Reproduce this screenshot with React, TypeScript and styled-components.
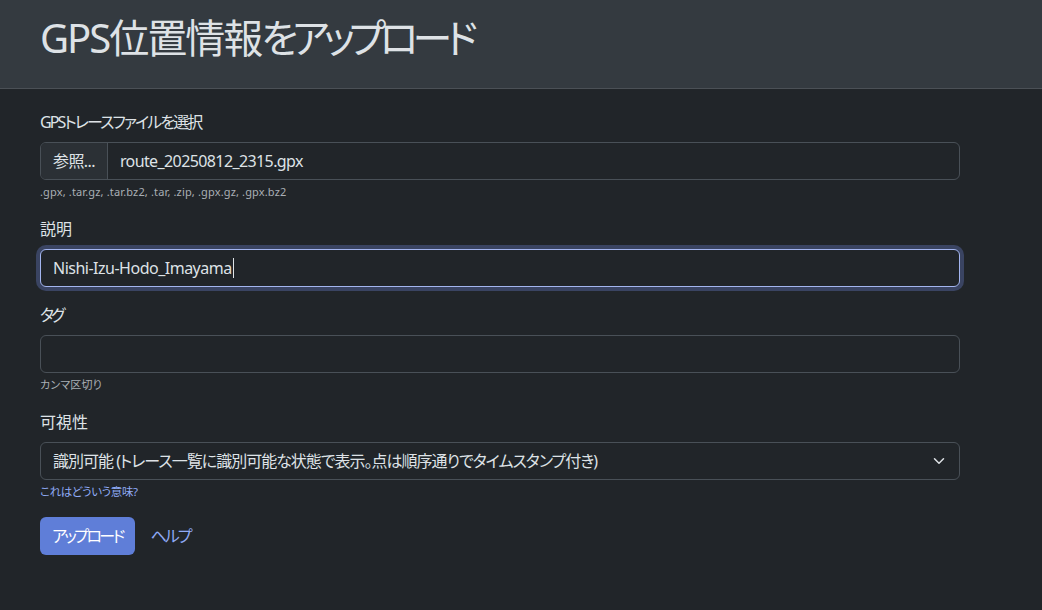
import styled, { createGlobalStyle } from 'styled-components'

const GlobalStyle = createGlobalStyle`
	html, body {
		margin: 0;
		padding: 0;
		background: #212529;
	}
	body {
		font-family: 'Noto Sans', 'Noto Sans CJK JP', sans-serif;
		font-feature-settings: 'palt';
		color: #dee2e6;
		font-size: 16px;
		line-height: 1.5;
	}
	* {
		box-sizing: border-box;
	}
`

function App() {
	return (
		<Page>
			<GlobalStyle />
			<Header>
				<Title>
					GPS位置情報<Kana>をアップロード</Kana>
				</Title>
			</Header>
			<Content>
				<Group>
					<Label $tight={-1.9}>GPSトレースファイルを選択</Label>
					<InputGroup>
						<BrowseButton>参照...</BrowseButton>
						<FileName>route_20250812_2315.gpx</FileName>
					</InputGroup>
					<Hint>.gpx, .tar.gz, .tar.bz2, .tar, .zip, .gpx.gz, .gpx.bz2</Hint>
				</Group>
				<Group>
					<Label>説明</Label>
					<TextInput $focused>
						Nishi-Izu-Hodo_Imayama
						<Caret />
					</TextInput>
				</Group>
				<Group>
					<Label $tight={-3}>タグ</Label>
					<TextInput />
					<Hint>カンマ区切り</Hint>
				</Group>
				<Group>
					<Label>可視性</Label>
					<Select>
						識別可能 (トレース一覧に識別可能な状態で表示。点は順序通りでタイムスタンプ付き)
						<Chevron viewBox="0 0 16 16" width="16" height="12">
							<path
								d="m2 5 6 6 6-6"
								fill="none"
								stroke="#dee2e6"
								strokeWidth="2"
								strokeLinecap="round"
								strokeLinejoin="round"
							/>
						</Chevron>
					</Select>
					<HintLink>これはどういう意味?</HintLink>
				</Group>
				<Actions>
					<PrimaryButton>アップロード</PrimaryButton>
					<LinkButton>ヘルプ</LinkButton>
				</Actions>
			</Content>
		</Page>
	)
}

const Page = styled.div`
	min-height: 610px;
	background: #212529;
`

const Header = styled.header`
	height: 89px;
	background: #343a40;
	border-bottom: 1px solid #4b5056;
	padding: 14px 40px 0;
`

const Title = styled.h1`
	margin: 0;
	font-size: 40px;
	font-weight: 400;
	line-height: 48px;
	color: #dee2e6;
	letter-spacing: -2px;
`

const Kana = styled.span`
	letter-spacing: -6px;
`

const Content = styled.main`
	width: 1000px;
	padding: 21px 40px 0;
	display: flex;
	flex-direction: column;
	gap: 16px;
`

const Group = styled.div`
	display: flex;
	flex-direction: column;
	width: 920px;
`

const Label = styled.label<{ $tight?: number }>`
	display: block;
	margin-bottom: 8px;
	font-size: 16px;
	line-height: 24px;
	letter-spacing: ${(p) => p.$tight ?? 0}px;
`

const InputGroup = styled.div`
	display: flex;
	height: 38px;
	border: 1px solid #495057;
	border-radius: 6px;
	overflow: hidden;
	letter-spacing: -0.6px;
`

const BrowseButton = styled.div`
	display: flex;
	align-items: center;
	padding: 0 12px;
	background: #2b3035;
	border-right: 1px solid #495057;
`

const FileName = styled.div`
	display: flex;
	align-items: center;
	padding: 0 12px;
	flex: 1;
`

const TextInput = styled.div<{ $focused?: boolean }>`
	display: flex;
	align-items: center;
	height: 38px;
	padding: 0 12px;
	border: 1px solid ${(p) => (p.$focused ? '#a3b5ef' : '#495057')};
	border-radius: 6px;
	background: #212529;
	box-shadow: ${(p) => (p.$focused ? '0 0 0 4px #3a4462' : 'none')};
	letter-spacing: -0.5px;
`

const Caret = styled.span`
	display: inline-block;
	width: 1px;
	height: 20px;
	background: #dee2e6;
	margin-left: 1px;
`

const Select = styled.div`
	display: flex;
	align-items: center;
	height: 38px;
	padding: 0 12px;
	border: 1px solid #495057;
	border-radius: 6px;
	white-space: nowrap;
	letter-spacing: -1px;
`

const Chevron = styled.svg`
	margin-left: auto;
`

const Hint = styled.div`
	margin-top: 3px;
	font-size: 11px;
	line-height: 18px;
	color: #a9afb5;
	letter-spacing: 0.15px;
`

const HintLink = styled.a`
	margin-top: 3px;
	font-size: 11.5px;
	line-height: 18px;
	color: #8faaf5;
	text-decoration: none;
	letter-spacing: -0.4px;
`

const Actions = styled.div`
	display: flex;
	gap: 4px;
`

const PrimaryButton = styled.button`
	height: 38px;
	padding: 0 12px;
	border: 0;
	border-radius: 6px;
	background: #5f7ed8;
	color: #fff;
	font: inherit;
	font-size: 16px;
	letter-spacing: -2.6px;
`

const LinkButton = styled.a`
	display: flex;
	align-items: center;
	height: 38px;
	padding: 0 12px;
	color: #8faaf5;
	text-decoration: none;
	letter-spacing: -2px;
`

export default App
